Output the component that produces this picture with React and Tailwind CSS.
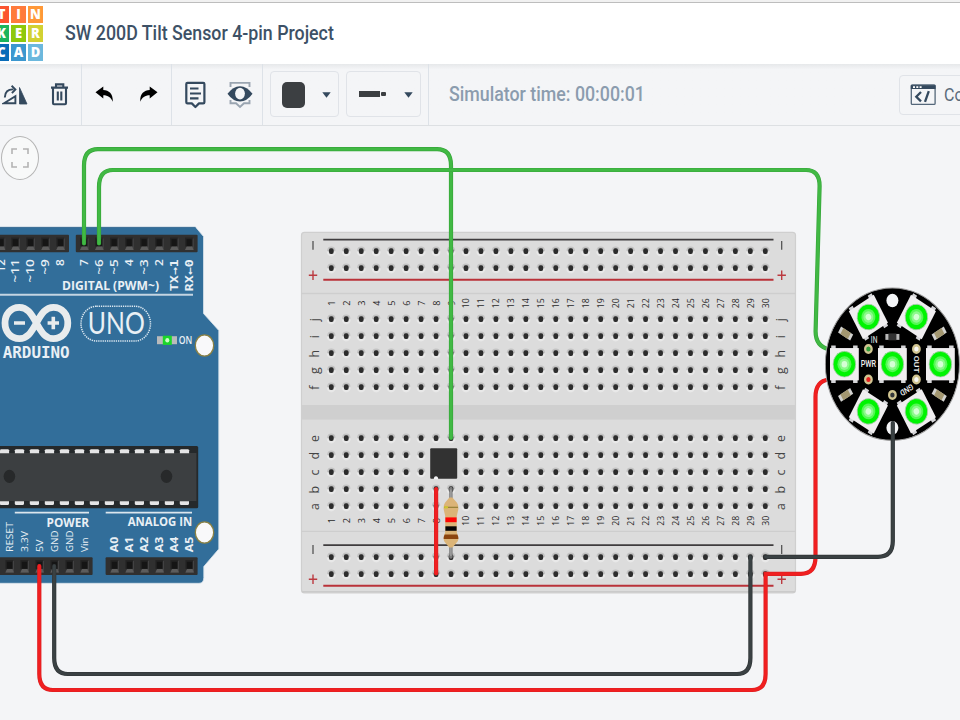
import React from "react";

const INK = "#34495e";

/* ---------- toolbar ---------- */

const LOGO = [
  ["T", "bg-[#fb5430]"], ["I", "bg-[#ff7b3c]"], ["N", "bg-[#ff9838]"],
  ["K", "bg-[#1cb45c]"], ["E", "bg-[#8fc90c]"], ["R", "bg-[#d2d132]"],
  ["C", "bg-[#0a6cb8]"], ["A", "bg-[#3c97cf]"], ["D", "bg-[#6cb8dd]"],
];

function Logo() {
  return (
    <div className="-ml-[6px] grid shrink-0 grid-cols-[15px_15px_15px] grid-rows-[17px_17px_17px] gap-x-[2px] gap-y-[2px]">
      {LOGO.map(([c, bg]) => (
        <div key={c} className={`flex items-center justify-center font-['Open_Sans',sans-serif] text-[13px] leading-none font-extrabold text-white ${bg}`}>
          <span className="scale-y-110">{c}</span>
        </div>
      ))}
    </div>
  );
}

function MirrorIcon() {
  return (
    <svg width="26" height="20" viewBox="2 84 26 20" fill="none" stroke={INK} strokeWidth="1.9">
      <path d="M19.5 86.5V103H27z" fill={INK} strokeWidth="0.8" />
      <path d="M4 102.2L15.4 95.2V102.2z" />
      <path d="M4.8 96.5C4.8 91 8 88 13.5 88.4" />
      <path d="M11.6 84.8L15.4 88.5L11.9 92.2" />
    </svg>
  );
}

function TrashIcon() {
  return (
    <svg width="18" height="23" viewBox="51 83 18 23" fill="none" stroke={INK} strokeWidth="2.1">
      <path d="M51 87.6H68M56 87.5V84.4H63.3V87.5" />
      <path d="M53 88V103.2Q53 104.2 54 104.2H65Q66 104.2 66 103.2V88" />
      <path d="M57.8 91.5V100.5M61.3 91.5V100.5" />
    </svg>
  );
}

function UndoIcon({ flip }) {
  return (
    <svg width="19" height="17" viewBox="0 0 19 17" className={flip ? "-scale-x-100" : ""}>
      <path d="M0.5 6.3L8.3 0.5V4C14 4.4 17.8 7.6 17.8 14.6V15.8C16 11.4 13 9.2 8.3 9.2V12.6z" fill="#000" />
    </svg>
  );
}

function NoteIcon() {
  return (
    <svg width="22" height="28" viewBox="184 81 22 28" fill="none" stroke={INK} strokeWidth="2.2" strokeLinejoin="round">
      <path d="M187.5 82.8H203.2Q204.4 82.8 204.4 84V102.2Q204.4 103.4 203.2 103.4H199L195.4 107L191.8 103.4H187.5Q186.3 103.4 186.3 102.2V84Q186.3 82.8 187.5 82.8z" />
      <path d="M190 88.5H198.5M190 93.5H201M190 98.3H198.5" />
    </svg>
  );
}

function EyeIcon() {
  return (
    <svg width="26" height="28" viewBox="227 81 26 28" fill="none">
      <path d="M230.5 87V82.9H249.5V87M230.5 100V103.2H236L240 107L244 103.2H249.5V100" stroke="#9aa5b1" strokeWidth="1.9" />
      <path d="M227.5 93.7Q233 86.2 240 86.2T252.5 93.7Q247 101.4 240 101.4T227.5 93.7z" fill={INK} />
      <ellipse cx="240" cy="93.6" rx="4.9" ry="5.8" fill="#f4f5f7" />
    </svg>
  );
}

function CodeIcon() {
  return (
    <svg width="26" height="22" viewBox="910 84 26 22" fill="none" className="shrink-0">
      <rect x="911.3" y="85" width="23.8" height="19.4" rx="1" stroke="#54677a" strokeWidth="1.3" />
      <path d="M910.8 85.2H935.6V89H910.8z" fill={INK} />
      <path d="M913 87.2H921.8" stroke="#fff" strokeWidth="1.7" strokeDasharray="2 1.3" />
      <path d="M921 92L916.3 96.7L921 101.4M928.8 91.2L925 101.8" stroke={INK} strokeWidth="2.3" />
    </svg>
  );
}

function Caret() {
  return (
    <svg width="9" height="6" viewBox="0 0 9 6"><path d="M0.3 0.3H8.7L4.5 5.8z" fill={INK} /></svg>
  );
}

function Header() {
  return (
    <header className="flex h-16 items-center border-t-2 border-[#f1f1f1] bg-white">
      <div className="flex h-full w-full items-center border-t border-[#bdbdbd]">
        <Logo />
        <h1 className="mb-[2px] ml-[22px] scale-y-[1.13] text-[17.8px] leading-none font-medium whitespace-nowrap text-[#3d5166]">
          SW 200D Tilt Sensor 4-pin Project
        </h1>
      </div>
    </header>
  );
}

function Toolbar() {
  return (
    <div className="flex h-[62px] border-b border-[#dde0e3] bg-[#f4f5f7] bg-linear-to-b from-[#e6e8ea] from-0% to-[#f4f5f7] to-[9%]">
      <div className="flex w-[82px] shrink-0 items-center gap-[23px] border-r border-[#dde2e8] pl-[2px]">
        <MirrorIcon />
        <TrashIcon />
      </div>
      <div className="flex w-[90px] shrink-0 items-center gap-[25px] border-r border-[#dde2e8] pl-[13px]">
        <UndoIcon />
        <UndoIcon flip />
      </div>
      <div className="flex w-[91px] shrink-0 items-center gap-[21px] border-r border-[#dde2e8] pl-[12px]">
        <NoteIcon />
        <EyeIcon />
      </div>
      <div className="flex w-[166px] shrink-0 items-center gap-[7px] border-r border-[#dde2e8] pb-[2px] pl-[7px]">
        <div className="flex h-[46px] w-[69px] items-center justify-between rounded-[4px] border border-[#e0e3e8] pt-[2px] pr-[7px] pl-[11px]">
          <div className="h-[26px] w-[23px] rounded-[5px] bg-[#3c3f42]" />
          <Caret />
        </div>
        <div className="flex h-[46px] w-[75px] items-center rounded-[4px] border border-[#e0e3e8] pt-[2px] pr-[7px] pl-[12px]">
          <div className="mb-[2px] h-[6px] w-[21px] bg-[#3c3f42]" />
          <div className="mb-[2px] ml-[1px] h-[4px] w-[5px] rounded-[1px] bg-[#3c3f42]" />
          <div className="ml-auto"><Caret /></div>
        </div>
      </div>
      <div className="flex flex-1 items-center justify-between overflow-hidden pl-[20px]">
        <span className="mb-[2px] scale-y-[1.13] text-[17.8px] leading-none font-medium whitespace-nowrap text-[#8b9cae]">
          Simulator time: 00:00:01
        </span>
        <button className="-mr-[24px] flex h-[40px] w-[85px] shrink-0 items-center gap-[8px] rounded-[4px] border border-[#e0e3e8] pl-[10px] text-[#5b6b7c]">
          <CodeIcon />
          <span className="scale-y-[1.13] text-[16px] leading-none">Code</span>
        </button>
      </div>
    </div>
  );
}

/* ---------- circuit parts ---------- */

const SANS = "'Open Sans', 'Noto Sans', sans-serif";
const range = (n) => Array.from({ length: n }, (_, i) => i);

function Label({ x, y, size, len, rot = 0, anchor = "middle", fill = "#e9f0f5", weight = 400, font = SANS, children }) {
  return (
    <text
      transform={`translate(${x} ${y}) rotate(${rot})`}
      fontSize={size}
      textLength={len}
      lengthAdjust={len ? "spacingAndGlyphs" : undefined}
      textAnchor={anchor}
      fill={fill}
      fontWeight={weight}
      fontFamily={font}
    >
      {children}
    </text>
  );
}

function Socket({ x, y }) {
  return (
    <g transform={`translate(${x} ${y})`}>
      <path d="M2 -5H4.3V6.5H-4.2L-2 2z" fill="#454546" />
      <rect x="-4.2" y="-6" width="7.6" height="9" fill="#242424" />
      <path d="M-4.2 6.5L-2.4 2.8H2.6L4.3 6.5z" fill="#5c5c5c" />
      <rect x="-2.8" y="-4.2" width="5.2" height="7" fill="#151515" />
    </g>
  );
}

const PINS_TOP = [
  [1, "12", 13], [15.5, "~11", 23.5], [30.5, "~10", 23.5], [45.5, "~9", 15.5], [60.5, "8", 6.8],
  [84.3, "7", 6.8], [99.3, "~6", 15.5], [114.3, "~5", 15.5], [129.3, "4", 6.8], [144.3, "~3", 15.5], [159.3, "2", 6.8],
];
const PINS_POWER = [
  [9.7, "RESET", 30], [24.7, "3.3V", 21], [39.7, "5V", 12.5], [54.5, "GND", 21.5], [69.5, "GND", 21.5], [84.5, "Vin", 14.5],
];

function Arduino() {
  return (
    <g>
      <path d="M-5 227H195.5L203.5 236.5V313.5L218.8 330.5V549L203.8 566.5V577.5Q203.8 583.3 199 583.3H-5z" fill="#326e9a" stroke="#d9e3eb" strokeWidth="0.8" />
      <path d="M-5 227.4H195.5" stroke="#2a618a" strokeWidth="0.8" />

      <rect x="-5" y="234.7" width="74" height="17.6" rx="1" fill="#303030" />
      <rect x="75.8" y="234.7" width="121.8" height="17.6" rx="1" fill="#303030" />
      {[1, 15.5, 30.5, 45.5, 60.5, ...range(8).map((i) => 84.3 + i * 15)].map((x) => <Socket key={x} x={x} y={243.5} />)}
      {PINS_TOP.map(([x, t, len]) => (
        <Label key={x} x={x + 3.8} y={259.2} rot={-90} anchor="end" size={10.4} len={len} weight={600}>{t}</Label>
      ))}
      <Label x={177.8} y={259.2} rot={-90} anchor="end" size={10} len={32} weight={700} font="'DejaVu Sans Mono', monospace">TX→1</Label>
      <Label x={192.8} y={259.2} rot={-90} anchor="end" size={10} len={32} weight={700} font="'DejaVu Sans Mono', monospace">RX←0</Label>
      <Label x={110.5} y={289.7} size={12.6} len={97} weight={700}>DIGITAL (PWM~)</Label>
      <path d="M0 294.8H193" stroke="#c4d5e2" strokeWidth="2" />

      <path d="M36.4 323C31 313 27 307.3 19.4 307.3C10.5 307.3 5 314.5 5 323S10.5 338.7 19.4 338.7C27 338.7 31 333 36.4 323C41.8 313 45.8 307.3 53.4 307.3C62.3 307.3 67.8 314.5 67.8 323S62.3 338.7 53.4 338.7C45.8 338.7 41.8 333 36.4 323z" fill="none" stroke="#e9eced" strokeWidth="6.8" />
      <path d="M14 323H25M47.6 323H59M53.3 316.8V329.2" stroke="#e9eced" strokeWidth="3.6" />
      <Label x={36.2} y={357.5} size={15.4} len={67} weight={700} font="'DejaVu Sans Mono', monospace">ARDUINO</Label>
      <rect x="81" y="306.2" width="69.5" height="34.8" rx="15.5" ry="17.4" fill="none" stroke="#dce8f1" strokeWidth="1.5" strokeDasharray="1.3 0.9" />
      <Label x={116.3} y={334} size={30} len={57} weight={400} font="Lato, sans-serif">UNO</Label>

      <rect x="157" y="336.2" width="20" height="8" fill="#b9babb" />
      <rect x="162.8" y="335.7" width="9" height="9.2" fill="#1bd62a" />
      <ellipse cx="167.3" cy="340.3" rx="2" ry="2.3" fill="#c9ffc4" />
      <Label x={185.4} y={344.1} size={10.4} len={13.5} weight={600}>ON</Label>
      {[345.5, 532.5].map((y) => (
        <ellipse key={y} cx="204.5" cy={y} rx="9.2" ry="10.6" fill="#f9f9fa" stroke="#8b8143" strokeWidth="1.3" />
      ))}

      <rect x="-5" y="446" width="203.2" height="62.3" rx="1.5" fill="#25292b" />
      <path d="M-5 453H196.4V501H-5z" fill="#3c3f41" />
      {range(13).map((i) => (
        <g key={i} fill="#e5e5e6">
          <path d={`M${i * 15 - 0.2 + 0.9} 449.3h7.6l.8 1v2.9h-9.2v-2.9z`} />
          <path d={`M${i * 15 - 0.2} 501.2h9.2v2.9l-.8 1h-7.6l-.8 -1z`} />
        </g>
      ))}
      <ellipse cx="9.4" cy="476.3" rx="5.8" ry="6.6" fill="#27292a" />
      <ellipse cx="166.5" cy="476.3" rx="5.8" ry="6.6" fill="#27292a" />

      <path d="M14.8 512.6H89M105.7 512.6H192" stroke="#dce6ed" strokeWidth="1.8" />
      <Label x={67.8} y={526.5} size={12.4} len={42.5} weight={700}>POWER</Label>
      <Label x={160} y={526.3} size={12.4} len={64.5} weight={700}>ANALOG IN</Label>
      {PINS_POWER.map(([x, t, len]) => (
        <Label key={x} x={x + 3.2} y={552} rot={-90} anchor="start" size={9.2} len={len} weight={500}>{t}</Label>
      ))}
      {range(6).map((i) => (
        <Label key={i} x={118 + i * 15} y={552.3} rot={-90} anchor="start" size={10.6} len={15.5} weight={700}>{"A" + i}</Label>
      ))}
      <rect x="-5" y="557.3" width="97.6" height="17.6" rx="1" fill="#303030" />
      <rect x="105.6" y="557.3" width="92" height="17.6" rx="1" fill="#303030" />
      {range(6).map((i) => (
        <g key={i}>
          <Socket x={9.6 + i * 15} y={566} />
          <Socket x={114.6 + i * 15} y={566} />
        </g>
      ))}
    </g>
  );
}

const COLX = (i) => 331.3 + i * 14.966;
const ROWS = [
  ["", 251], ["", 268], ["j", 319], ["i", 336], ["h", 353], ["g", 370], ["f", 387],
  ["e", 438], ["d", 455], ["c", 472], ["b", 489], ["a", 506], ["", 557], ["", 574],
];

function Breadboard() {
  return (
    <g>
      <defs>
        <g id="hole">
          <ellipse cx="0" cy="0.8" rx="4.5" ry="4.6" fill="#e8e8e8" />
          <path d="M-4.3 0.3C-4.3 -3 -2.5 -4.4 0 -4.4S4.3 -3 4.3 0.3z" fill="#c2c2c2" />
          <rect x="-2.4" y="-2.7" width="4.8" height="5.6" rx="1.9" ry="2.2" fill="#2c2c2c" />
        </g>
      </defs>
      <rect x="301.5" y="232.3" width="494" height="360.5" rx="3" fill="#dcdcdc" stroke="#cfcfcf" strokeWidth="1.2" />
      <rect x="301.5" y="405" width="494" height="14.6" fill="#cfcfcf" />
      <path d="M301.5 293.5H795.5M301.5 531.3H795.5" stroke="#cecece" strokeWidth="1.3" />
      <path d="M301.8 591.8H795.2" stroke="#cacaca" strokeWidth="1.4" />
      <path d="M323.3 239.6H773.5M323.3 545.1H773.5" stroke="#3f3c3e" strokeWidth="1.9" />
      <path d="M323.3 279.8H773.5M323.3 585.7H773.5" stroke="#b93239" strokeWidth="1.9" />
      {ROWS.map(([, y]) => range(30).map((c) => <use key={y + "-" + c} href="#hole" x={COLX(c)} y={y} />))}
      {range(30).map((i) => (
        <g key={i}>
          <Label x={COLX(i) + 3.5} y={303.2} rot={-90} size={9.4} len={i < 9 ? 5.2 : 10} fill="#2a2a2a" weight={500}>{i + 1}</Label>
          <Label x={COLX(i) + 3.5} y={520.7} rot={-90} size={9.4} len={i < 9 ? 5.2 : 10} fill="#2a2a2a" weight={500}>{i + 1}</Label>
        </g>
      ))}
      {ROWS.filter(([t]) => t).map(([t, y]) => (
        <g key={t}>
          <Label x={319} y={y + 0.6} rot={-90} size={12.4} fill="#444">{t}</Label>
          <Label x={785} y={y + 0.6} rot={-90} size={12.4} fill="#444">{t}</Label>
        </g>
      ))}
      {[313, 781.7].map((x) => (
        <g key={x} fill="none" strokeWidth="1.2">
          <path d={`M${x} 241V249.8M${x} 545V554`} stroke="#4a4a4a" />
          <path d={`M${x - 4.2} 275.3h8.4m-4.2 -4.7v9.4M${x - 4.2} 579.2h8.4m-4.2 -4.7v9.4`} stroke="#bb3a40" strokeWidth="1.4" />
        </g>
      ))}
    </g>
  );
}

function Wire({ d, color, edge }) {
  return (
    <g fill="none" strokeLinecap="round">
      <path d={d} stroke={edge} strokeWidth="4.2" />
      <path d={d} stroke={color} strokeWidth="2.8" />
    </g>
  );
}

function Resistor() {
  return (
    <g>
      <path d="M450.9 488.5V557" stroke="#7d7d7d" strokeWidth="3.4" strokeLinecap="round" />
      <path d="M450.9 489.5V556" stroke="#a2a2a2" strokeWidth="1.4" />
      <path d="M449.4 497.6H452.4L457 502.8Q458.6 505 458.4 509L456.8 516V532L458.4 538.5Q458.5 541 456.5 542.8L452.6 547.5H449.2L445.3 542.8Q443.5 541 443.6 538.5L445.2 532V516L443.6 509Q443.4 505 445 502.8z" fill="#dbb477" />
      <path d="M444 507.3H458" stroke="#8d7a30" strokeWidth="1.1" />
      <path d="M444.2 507.3H448" stroke="#cfc52f" strokeWidth="2.2" />
      <rect x="445.4" y="517.4" width="11.2" height="4.8" fill="#fd0505" />
      <rect x="445.4" y="526.3" width="11.2" height="4.5" fill="#050505" />
      <path d="M444.6 534.5H457.4L458.3 537V539H443.7V537z" fill="#8b450f" />
    </g>
  );
}

/* One RGB package of the ring, centred on its own origin. */
function Pixel({ x, y, rot = 0 }) {
  return (
    <g transform={`translate(${x} ${y}) rotate(${rot})`}>
      <path d="M-13.2 -16.5h4.5v33h-4.5zM8.7 -16.5h4.5v33h-4.5z" fill="#d5d5d8" />
      <rect x="-14.4" y="-14.2" width="28.8" height="28.4" fill="#f0eef0" />
      <circle r="11.3" fill="#00f402" stroke="#b7c9b9" strokeWidth="0.7" />
      <circle r="7" fill="#55f955" />
      <circle r="5" fill="#8cfa8c" />
      <circle r="2.8" fill="#d5ffd5" />
    </g>
  );
}

function Jewel() {
  return (
    <g transform="translate(892.4 364.2) scale(1 1.137)">
      <circle r="67" fill="#000" stroke="#9a9a9a" strokeWidth="0.9" />
      <Pixel x={0} y={0} />
      <Pixel x={-48} y={0} />
      <Pixel x={48} y={0} />
      <Pixel x={-24} y={-41.5} rot={-30} />
      <Pixel x={24} y={-41.5} rot={30} />
      <Pixel x={-24} y={41.5} rot={30} />
      <Pixel x={24} y={41.5} rot={-30} />
      {[[-46.8, -27, 30], [46.8, -27, -30], [-46.8, 27, -30], [46.8, 27, 30]].map(([x, y, r]) => (
        <g key={x + "," + y} transform={`translate(${x} ${y}) rotate(${r})`}>
          <rect x="-7" y="-3" width="14" height="6" fill="#d2d2d0" />
          <rect x="-4.3" y="-3" width="8.6" height="6" fill="#a39770" />
        </g>
      ))}
      <rect x="-7" y="-26.6" width="14" height="5.2" fill="#b9b9b9" />
      <rect x="-4" y="-27" width="8" height="6" fill="#333" />
      <circle cy="-56" r="6" fill="#f4f5f7" />
      <circle cy="56" r="6" fill="#f4f5f7" />
      {[[-24, -13.4, "#2f9e3a"], [-24, 13.4, "#e8201f"], [24, -13.4, "#f7f7f7"], [24, 13.4, "#f7f7f7"], [0, 27, "#35383a"]].map(([x, y, c]) => (
        <circle key={x + "," + y} cx={x} cy={y} r="3.3" fill={c} stroke="#d1c591" strokeWidth="2.2" />
      ))}
      <Label x={-18.3} y={-18.5} size={7.4} len={6.5} fill="#f2f2f2" font="Roboto, sans-serif">IN</Label>
      <Label x={-24} y={2.6} size={7.4} len={15.5} fill="#f2f2f2" font="Roboto, sans-serif" weight={500}>PWR</Label>
      <Label x={21.8} y={0} rot={90} size={7.4} len={15} fill="#f2f2f2" font="Roboto, sans-serif" weight={500}>OUT</Label>
      <Label x={13} y={20.3} rot={151} size={7.4} len={14} fill="#f2f2f2" font="Roboto, sans-serif" weight={500}>GND</Label>
    </g>
  );
}

const GREEN = ["#41b944", "#36a63a"];
const RED = ["#f11f20", "#dc2022"];
const BLACK = ["#3a4143", "#303537"];

function Circuit() {
  return (
    <svg className="block h-full w-full" viewBox="0 126 960 594">
      <Arduino />
      <Breadboard />
      <rect x="430.2" y="448.3" width="27" height="30.5" rx="1" fill="#323232" />
      <path d="M433.8 479.2Q433.8 476.3 436 476.3T438.2 479.2z" fill="#f4f5f7" />
      <Resistor />
      <Wire d="M436.1 489V573.5" color={RED[0]} edge={RED[1]} />
      <Wire d="M84 243.5V165.5Q84 149.2 98 149.2H437Q451 149.2 451 165.5V438" color={GREEN[0]} edge={GREEN[1]} />
      <Wire d="M99 243.5V187Q99 170 113 170H806Q819.6 170 819.6 186L815.6 331Q815.4 346 829 349.3H840" color={GREEN[0]} edge={GREEN[1]} />
      <Wire d="M840 379.5H829Q815.5 381 815.5 397V557Q815.5 573.8 801 573.8H765.6V674Q765.6 690 752 690H53Q39.3 690 39.3 674V566" color={RED[0]} edge={RED[1]} />
      <Wire d="M54.2 566V658Q54.2 674 68 674H737Q750.4 674 750.4 658V557" color={BLACK[0]} edge={BLACK[1]} />
      <Jewel />
      <Wire d="M892.8 423V541Q892.8 556.8 878 556.8H765.5" color={BLACK[0]} edge={BLACK[1]} />
    </svg>
  );
}

export default function App() {
  return (
    <div className="flex h-[720px] w-[960px] flex-col overflow-hidden bg-[#f4f5f7] font-[Roboto,sans-serif]">
      <Header />
      <Toolbar />
      <main className="relative h-[594px] bg-[#f4f5f7]">
        <Circuit />
        <button className="absolute top-[10px] left-[1px] flex h-[44px] w-[38px] items-center justify-center rounded-[50%] border border-[#b5b5b5] bg-[#f8f9f9]">
          <svg width="18" height="20" viewBox="0 0 18 20" fill="none" stroke="#b3b3b3" strokeWidth="1.6">
            <path d="M1 6V1H6M12 1H17V6M17 14V19H12M6 19H1V14" />
          </svg>
        </button>
      </main>
    </div>
  );
}
